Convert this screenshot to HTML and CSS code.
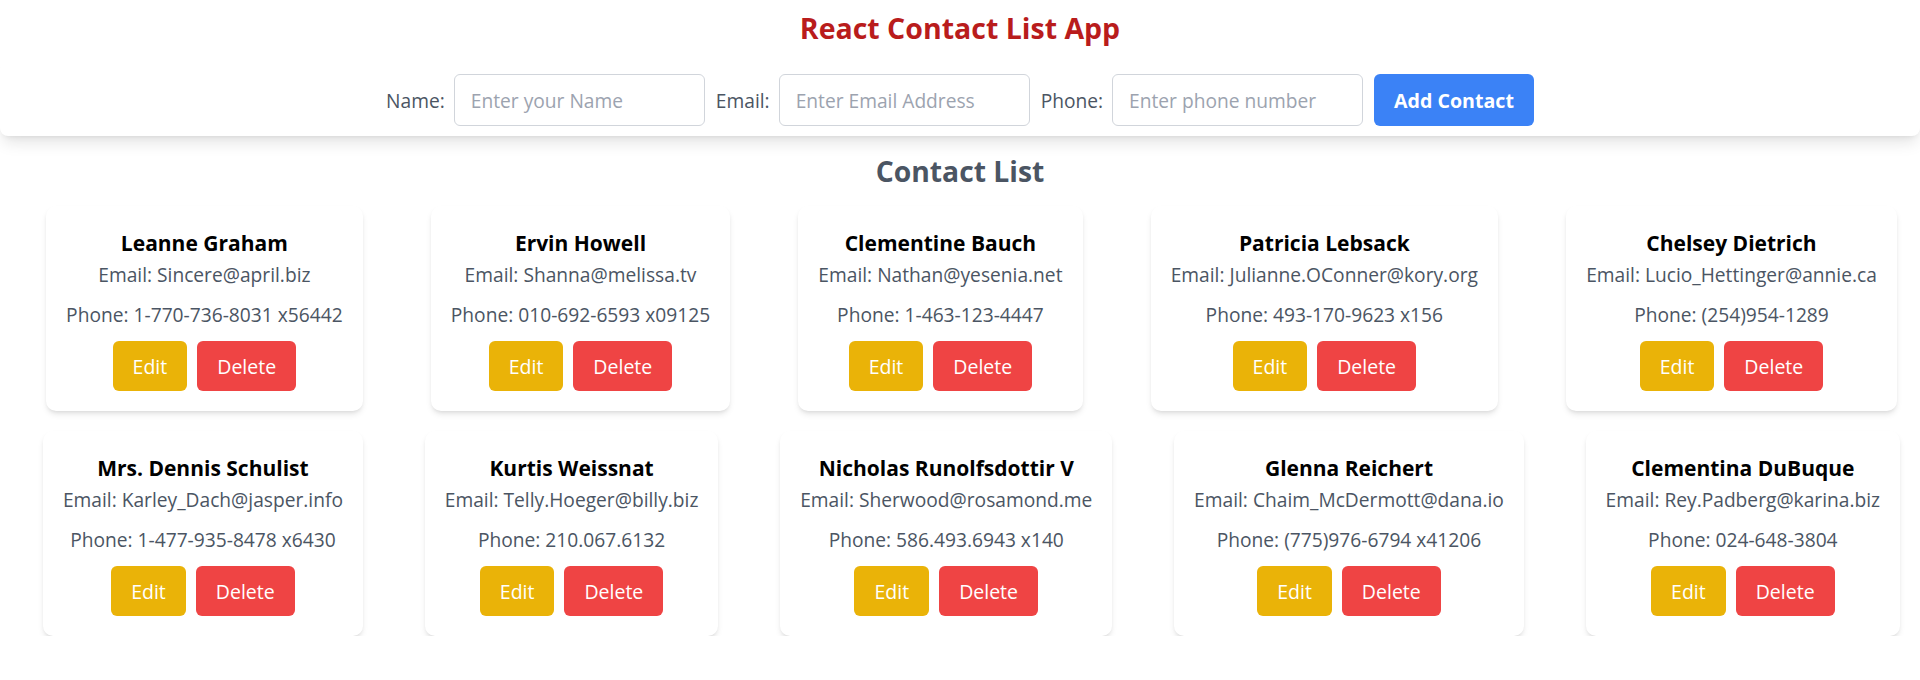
FILE: index.html
```html
<!DOCTYPE html>
<html lang="en">
<head>
<meta charset="utf-8">
<title>React Contact List App</title>
<link rel="stylesheet" href="styles.css">
</head>
<body>
<div class="app">
  <h1 class="app-title">React Contact List App</h1>
  <form class="contact-form">
    <label class="form-label">Name:</label>
    <input class="form-input" type="text" placeholder="Enter your Name">
    <label class="form-label">Email:</label>
    <input class="form-input" type="text" placeholder="Enter Email Address">
    <label class="form-label">Phone:</label>
    <input class="form-input" type="text" placeholder="Enter phone number">
    <button class="add-btn" type="button">Add Contact</button>
  </form>
  <h2 class="list-title">Contact List</h2>
  <div class="cards">
    <div class="card">
      <h3 class="card-name">Leanne Graham</h3>
      <p class="card-email">Email: Sincere@april.biz</p>
      <p class="card-phone">Phone: 1-770-736-8031 x56442</p>
      <div class="card-actions"><button class="btn btn-edit">Edit</button><button class="btn btn-delete">Delete</button></div>
    </div>
    <div class="card">
      <h3 class="card-name">Ervin Howell</h3>
      <p class="card-email">Email: Shanna@melissa.tv</p>
      <p class="card-phone">Phone: 010-692-6593 x09125</p>
      <div class="card-actions"><button class="btn btn-edit">Edit</button><button class="btn btn-delete">Delete</button></div>
    </div>
    <div class="card">
      <h3 class="card-name">Clementine Bauch</h3>
      <p class="card-email">Email: Nathan@yesenia.net</p>
      <p class="card-phone">Phone: 1-463-123-4447</p>
      <div class="card-actions"><button class="btn btn-edit">Edit</button><button class="btn btn-delete">Delete</button></div>
    </div>
    <div class="card">
      <h3 class="card-name">Patricia Lebsack</h3>
      <p class="card-email">Email: Julianne.OConner@kory.org</p>
      <p class="card-phone">Phone: 493-170-9623 x156</p>
      <div class="card-actions"><button class="btn btn-edit">Edit</button><button class="btn btn-delete">Delete</button></div>
    </div>
    <div class="card">
      <h3 class="card-name">Chelsey Dietrich</h3>
      <p class="card-email">Email: Lucio_Hettinger@annie.ca</p>
      <p class="card-phone">Phone: (254)954-1289</p>
      <div class="card-actions"><button class="btn btn-edit">Edit</button><button class="btn btn-delete">Delete</button></div>
    </div>
    <div class="card">
      <h3 class="card-name">Mrs. Dennis Schulist</h3>
      <p class="card-email">Email: Karley_Dach@jasper.info</p>
      <p class="card-phone">Phone: 1-477-935-8478 x6430</p>
      <div class="card-actions"><button class="btn btn-edit">Edit</button><button class="btn btn-delete">Delete</button></div>
    </div>
    <div class="card">
      <h3 class="card-name">Kurtis Weissnat</h3>
      <p class="card-email">Email: Telly.Hoeger@billy.biz</p>
      <p class="card-phone">Phone: 210.067.6132</p>
      <div class="card-actions"><button class="btn btn-edit">Edit</button><button class="btn btn-delete">Delete</button></div>
    </div>
    <div class="card">
      <h3 class="card-name">Nicholas Runolfsdottir V</h3>
      <p class="card-email">Email: Sherwood@rosamond.me</p>
      <p class="card-phone">Phone: 586.493.6943 x140</p>
      <div class="card-actions"><button class="btn btn-edit">Edit</button><button class="btn btn-delete">Delete</button></div>
    </div>
    <div class="card">
      <h3 class="card-name">Glenna Reichert</h3>
      <p class="card-email">Email: Chaim_McDermott@dana.io</p>
      <p class="card-phone">Phone: (775)976-6794 x41206</p>
      <div class="card-actions"><button class="btn btn-edit">Edit</button><button class="btn btn-delete">Delete</button></div>
    </div>
    <div class="card">
      <h3 class="card-name">Clementina DuBuque</h3>
      <p class="card-email">Email: Rey.Padberg@karina.biz</p>
      <p class="card-phone">Phone: 024-648-3804</p>
      <div class="card-actions"><button class="btn btn-edit">Edit</button><button class="btn btn-delete">Delete</button></div>
    </div>
  </div>
</div>
</body>
</html>
```
FILE: styles.css
```css
html, body {
  margin: 0;
  padding: 0;
  background: #ffffff;
}

body {
  font-family: "Open Sans", "Noto Sans", sans-serif;
  overflow-x: hidden;
  color: #4b5563;
}

.app {
  display: flex;
  flex-direction: column;
}

.app-title {
  margin: 8px 0 0;
  font-size: 28.5px;
  line-height: 40px;
  font-weight: 700;
  color: #b91c1c;
  text-align: center;
}

.contact-form {
  margin: 15px 0 0;
  padding: 11px 0 10px;
  background: #ffffff;
  border-radius: 8px;
  box-shadow: 0 10px 15px -3px rgba(0, 0, 0, 0.1), 0 4px 6px -4px rgba(0, 0, 0, 0.1);
  display: flex;
  align-items: center;
  justify-content: center;
}

.form-label {
  font-size: 19.2px;
  color: #4b5563;
  margin-right: 9px;
}

.form-input {
  box-sizing: border-box;
  width: 251px;
  height: 52px;
  margin: 0 11px 0 0;
  padding: 0 16px;
  border: 1px solid #d1d5db;
  border-radius: 6px;
  font-family: inherit;
  font-size: 19.2px;
  color: #374151;
  background: #ffffff;
  outline: none;
}

.form-input::placeholder {
  color: #9ca3af;
}

.add-btn {
  box-sizing: border-box;
  height: 52px;
  padding: 0 20px;
  border: none;
  border-radius: 6px;
  background: #3b82f6;
  color: #ffffff;
  font-family: inherit;
  font-size: 19.6px;
  font-weight: 700;
}

.list-title {
  margin: 15px 0 0;
  font-size: 28.3px;
  line-height: 40px;
  font-weight: 700;
  color: #4b5563;
  text-align: center;
}

.cards {
  margin: 15px -11px 0 12px;
  display: flex;
  flex-wrap: wrap;
  justify-content: space-around;
  row-gap: 20px;
}

.card {
  flex: none;
  margin: 0 16px;
  padding: 23px 20px 20px;
  background: #ffffff;
  border-radius: 10px;
  box-shadow: 0 4px 6px -1px rgba(0, 0, 0, 0.1), 0 2px 4px -2px rgba(0, 0, 0, 0.1);
  text-align: center;
  display: flex;
  flex-direction: column;
  align-items: center;
}

.card-name {
  margin: 0;
  font-size: 21px;
  line-height: 28px;
  font-weight: 700;
  color: #000000;
  white-space: nowrap;
}

.card-email,
.card-phone {
  margin: 4px 0 0;
  font-size: 19.2px;
  line-height: 28px;
  color: #4b5563;
  white-space: nowrap;
}

.card-phone {
  margin-top: 12px;
}

.card-actions {
  margin-top: 12px;
  display: flex;
  gap: 10px;
}

.btn {
  box-sizing: border-box;
  height: 50px;
  padding: 0 20px;
  border: none;
  border-radius: 6px;
  color: #ffffff;
  font-family: inherit;
  font-size: 19.5px;
}

.btn-edit {
  background: #eab308;
}

.btn-delete {
  background: #ef4444;
}
```
